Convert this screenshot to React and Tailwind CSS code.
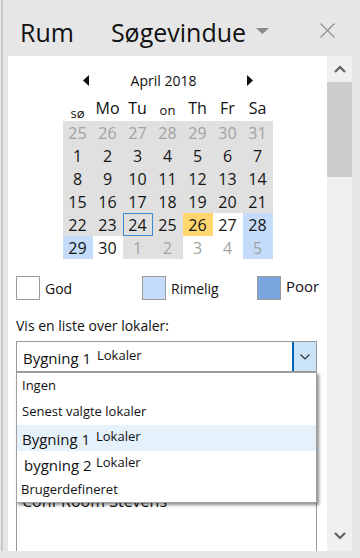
import React from 'react';

const FONT = "font-['Segoe_UI','Open_Sans','Noto_Sans',sans-serif]";

// calendar cells: [day, bg, muted, selected]
const weeks = [
    [[25, 'g', 1], [26, 'g', 1], [27, 'g', 1], [28, 'g', 1], [29, 'g', 1], [30, 'g', 1], [31, 'g', 1]],
    [[1, 'g'], [2, 'g'], [3, 'g'], [4, 'g'], [5, 'g'], [6, 'g'], [7, 'g']],
    [[8, 'g'], [9, 'g'], [10, 'g'], [11, 'g'], [12, 'g'], [13, 'g'], [14, 'g']],
    [[15, 'g'], [16, 'g'], [17, 'g'], [18, 'g'], [19, 'g'], [20, 'g'], [21, 'g']],
    [[22, 'g'], [23, 'g'], [24, 'g', 0, 1], [25, 'g'], [26, 'y'], [27, 'w'], [28, 'b']],
    [[29, 'b'], [30, 'w'], [1, 'g', 1], [2, 'g', 1], [3, 'w', 1], [4, 'w', 1], [5, 'b', 1]],
];

const bgClass = {
    g: 'bg-[#e0e0e0]',
    y: 'bg-[#ffd76e]',
    w: 'bg-white',
    b: 'bg-[#c4dcfa]',
};

const weekdays = [
    { t: 'sø', c: 'text-[13px] pb-px' },
    { t: 'Mo', c: 'text-[16px]' },
    { t: 'Tu', c: 'text-[16px]' },
    { t: 'on', c: 'text-[13px] -mb-px' },
    { t: 'Th', c: 'text-[16px]' },
    { t: 'Fr', c: 'text-[16px]' },
    { t: 'Sa', c: 'text-[16px]' },
];

function Chevron({ up }) {
    return (
        <svg width="12" height="8" viewBox="0 0 12 8">
            <polyline
                points={up ? '1,7 6,2 11,7' : '1,1 6,6 11,1'}
                fill="none"
                stroke="#606060"
                strokeWidth="2.2"
            />
        </svg>
    );
}

function Calendar() {
    return (
        <div className="w-[210px] mx-auto pt-4">
            {/* month nav */}
            <div className="h-[17px] flex items-center justify-between px-5">
                <svg width="6" height="11" viewBox="0 0 6 11"><polygon points="6,0 0,5.5 6,11" fill="#111" /></svg>
                <span className="text-[14px] text-[#111] leading-none -ml-2">April 2018</span>
                <svg width="6" height="11" viewBox="0 0 6 11"><polygon points="0,0 6,5.5 0,11" fill="#111" /></svg>
            </div>
            {/* weekdays */}
            <div className="grid grid-cols-7 h-[22px] mt-[10px] items-end">
                {weekdays.map((w) => (
                    <div key={w.t} className={`text-center text-[#111] leading-none pb-[5px] ${w.c}`}>{w.t}</div>
                ))}
            </div>
            {/* days */}
            <div className="grid grid-cols-7">
                {weeks.flat().map(([d, bg, muted, sel], i) => (
                    <div
                        key={i}
                        className={`h-[23px] flex items-center justify-center text-[16px] ${bgClass[bg]} ${muted ? 'text-[#a3a3a3]' : 'text-[#151515]'} ${sel ? 'border border-[#3b8ad2]' : ''}`}
                    >
                        {d}
                    </div>
                ))}
            </div>
        </div>
    );
}

function Legend() {
    const items = [
        { label: 'God', box: 'bg-white', w: 'w-[126px]', txt: 'text-[14px]' },
        { label: 'Rimelig', box: 'bg-[#c4dcfa]', w: 'w-[115px]', txt: 'text-[14px]' },
        { label: 'Poor', box: 'bg-[#7aa6e0]', w: '', txt: 'text-[15px] -mt-[3px]' },
    ];
    return (
        <div className="flex ml-2 mt-[17px] h-6">
            {items.map((it) => (
                <div key={it.label} className={`flex items-center ${it.w}`}>
                    <div className={`w-6 h-6 border border-[#9a9a9a] ${it.box}`} />
                    <span className={`ml-[5px] text-[#111] ${it.txt}`}>{it.label}</span>
                </div>
            ))}
        </div>
    );
}

function BuildingRow({ name, highlight, indent }) {
    return (
        <div className={`h-[26px] flex ${highlight ? 'bg-[#e5f1fb]' : ''}`}>
            <span className={`text-[15px] text-[#111] leading-none pt-[7px] w-[79px] whitespace-nowrap ${indent ? 'pl-[7px]' : 'pl-[5px]'}`}>{name}</span>
            <span className="text-[13px] text-[#111] leading-none pt-[5px] whitespace-nowrap">Lokaler</span>
        </div>
    );
}

export default function App() {
    return (
        <div className={`w-[360px] h-[558px] bg-[#e6e6e6] flex overflow-hidden ${FONT}`}>
            <div className="ml-px w-[2px] h-[551px] bg-[#c9c9c9] shrink-0" />
            <div className="flex-1 flex flex-col">
                {/* header */}
                <div className="h-[56px] flex items-start pt-[20px] pl-[17px] relative">
                    <span className="text-[25px] leading-none text-[#111]">Rum</span>
                    <span className="text-[25px] leading-none text-[#111] ml-[37px]">Søgevindue</span>
                    <svg className="ml-[10px] mt-[8px]" width="13" height="6" viewBox="0 0 13 6"><polygon points="0,0 13,0 6.5,6" fill="#8a8a8a" /></svg>
                    <svg className="absolute left-[317px] top-[23px]" width="15" height="15" viewBox="0 0 15 15">
                        <path d="M0.5 0.5 L14.5 14.5 M14.5 0.5 L0.5 14.5" stroke="#8d8d8d" strokeWidth="1.1" />
                    </svg>
                </div>

                {/* body */}
                <div className="flex ml-[5px] h-[495px]">
                    <div className="w-[319px] bg-white relative overflow-hidden">
                        <Calendar />
                        <Legend />

                        <div className="ml-2 mt-[17px] h-[18px] text-[14px] leading-[18px] text-[#111]">Vis en liste over lokaler:</div>

                        {/* combobox */}
                        <div className="ml-2 mt-[6px] w-[301px] h-[31px] border border-[#999] flex">
                            <div className="flex-1 flex">
                                <span className="text-[15px] text-[#111] leading-none pt-[9px] pl-[6px] w-[80px] whitespace-nowrap">Bygning 1</span>
                                <span className="text-[13px] text-[#111] leading-none pt-[7px] whitespace-nowrap">Lokaler</span>
                            </div>
                            <div className="w-[24px] bg-[#cce4f7] border-l-2 border-[#0063b1] flex items-center justify-center">
                                <svg width="10" height="6" viewBox="0 0 10 6"><polyline points="0.5,0.5 5,5 9.5,0.5" fill="none" stroke="#333" strokeWidth="1.2" /></svg>
                            </div>
                        </div>

                        {/* room list */}
                        <div className="ml-2 mt-[8px] w-[301px] h-[200px] border border-[#999] pl-[5px] pt-[112px]">
                            <div className="text-[16px] text-[#111] leading-none whitespace-nowrap">Conf Room Stevens</div>
                        </div>

                        {/* open dropdown */}
                        <div className="absolute left-2 top-[316px] w-[301px] h-[131px] bg-white border border-[#a0a0a0] shadow-[2px_2px_3px_rgba(0,0,0,0.45)]">
                            <div className="h-[26px] flex items-center pl-[5px] text-[13px] text-[#111]">Ingen</div>
                            <div className="h-[26px] flex items-center pl-[5px] text-[13px] text-[#111]">Senest valgte lokaler</div>
                            <BuildingRow name="Bygning 1" highlight />
                            <BuildingRow name="bygning 2" indent />
                            <div className="h-[26px] flex items-center pl-[4px] text-[13px] text-[#111]">Brugerdefineret</div>
                        </div>
                    </div>

                    {/* scrollbar */}
                    <div className="w-[25px] bg-[#f0f0f0] flex flex-col items-center">
                        <div className="h-[26px] w-full flex items-center justify-center"><Chevron up /></div>
                        <div className="w-full h-[95px] bg-[#cdcdcd]" />
                        <div className="flex-1" />
                        <div className="h-[30px] w-full flex items-center justify-center"><Chevron /></div>
                    </div>
                </div>
            </div>
        </div>
    );
}
